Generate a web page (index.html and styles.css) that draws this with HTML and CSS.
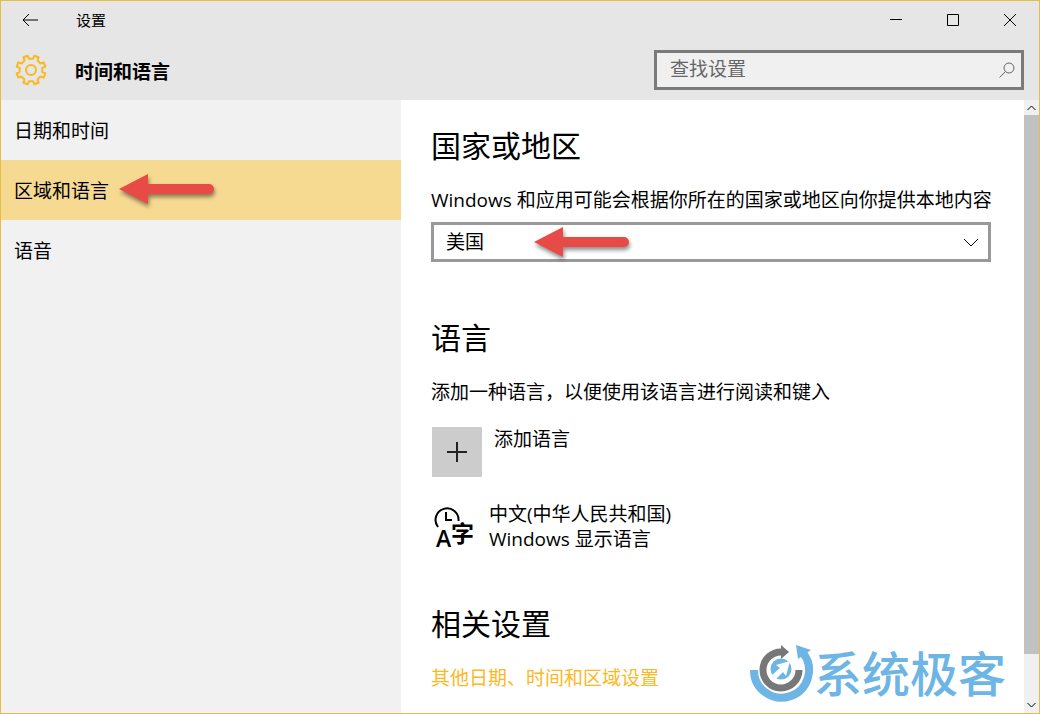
FILE: index.html
```html
<!DOCTYPE html>
<html lang="zh-CN">
<head>
<meta charset="utf-8">
<title>设置</title>
<link rel="stylesheet" href="styles.css">
</head>
<body>
<div class="window">
  <header class="header">
    <div class="titlebar">
      <button class="back" aria-label="后退"><svg width="16" height="14" viewBox="0 0 16 14"><path d="M7 1L1 7l6 6M1 7h15"/></svg></button>
      <span class="app-name">设置</span>
      <div class="controls">
        <button aria-label="最小化"><svg width="12" height="12" viewBox="0 0 12 12"><path d="M0 5.5h12"/></svg></button>
        <button aria-label="最大化"><svg width="12" height="12" viewBox="0 0 12 12"><path d="M.5 .5h11v11H.5z"/></svg></button>
        <button aria-label="关闭"><svg width="12" height="12" viewBox="0 0 12 12"><path d="M0 0l12 12M12 0L0 12"/></svg></button>
      </div>
    </div>
    <div class="page-bar">
      <svg class="gear" width="32" height="32" viewBox="-16 -16 32 32"><path d="M11.300 2.100L14.300 3.400 12.700 7.600 9.500 6.500 6.500 9.500 7.600 12.700 3.400 14.300 2.100 11.300-2.100 11.300-3.400 14.300-7.600 12.700-6.500 9.500-9.500 6.500-12.700 7.600-14.300 3.400-11.300 2.100-11.300-2.100-14.300-3.400-12.700-7.600-9.500-6.500-6.500-9.500-7.600-12.700-3.400-14.300-2.100-11.300 2.100-11.300 3.400-14.300 7.600-12.700 6.500-9.500 9.500-6.500 12.700-7.600 14.300-3.400 11.300-2.100z"/><circle r="5"/></svg>
      <h1>时间和语言</h1>
      <label class="search">
        <input type="search" placeholder="查找设置" aria-label="查找设置">
        <svg width="16" height="16" viewBox="0 0 16 16"><circle cx="10" cy="6" r="5"/><path d="M6.4 9.6L.5 15.5"/></svg>
      </label>
    </div>
  </header>
  <div class="body">
    <nav class="sidebar">
      <a href="#date">日期和时间</a>
      <a href="#region" class="active" aria-current="page">区域和语言</a>
      <a href="#speech">语音</a>
      <svg class="arrow arrow-nav" width="104" height="40" viewBox="0 0 104 40"><path d="M3 18L32 3v10h61a5 5 0 0 1 0 10H32v10z"/></svg>
    </nav>
    <main class="content">
      <section class="region">
        <h2>国家或地区</h2>
        <label for="country">Windows 和应用可能会根据你所在的国家或地区向你提供本地内容</label>
        <div class="select-wrap">
          <select id="country"><option>美国</option></select>
          <svg class="chevron" width="16" height="9" viewBox="0 0 16 9"><path d="M1 1l7 7 7-7"/></svg>
          <svg class="arrow arrow-select" width="104" height="40" viewBox="0 0 104 40"><path d="M3 18L32 3v10h61a5 5 0 0 1 0 10H32v10z"/></svg>
        </div>
      </section>
      <section class="languages">
        <h2>语言</h2>
        <p>添加一种语言，以便使用该语言进行阅读和键入</p>
        <button class="add"><span class="plus"><svg width="20" height="20" viewBox="0 0 20 20"><path d="M10 0v20M0 10h20"/></svg></span><span>添加语言</span></button>
        <div class="language">
          <svg class="lang-icon" width="42" height="50" viewBox="0 0 42 50"><path class="line" d="M5 25A11.500 11.500 0 1 1 25.500 19M13 10v8h6"/><text class="glyph-a" x="3" y="45">A</text><text class="glyph-zi" x="18" y="40">字</text></svg>
          <div>中文(中华人民共和国)<br>Windows 显示语言</div>
        </div>
      </section>
      <section>
        <h2>相关设置</h2>
        <a class="related" href="#more">其他日期、时间和区域设置</a>
      </section>
    </main>
    <div class="scrollbar">
      <svg width="9" height="6" viewBox="0 0 9 6"><path d="M.5 5l4-4 4 4"/></svg>
      <div class="thumb"></div>
      <svg width="9" height="6" viewBox="0 0 9 6"><path d="M.5 1l4 4 4-4"/></svg>
    </div>
  </div>
  <div class="watermark">
    <svg width="64" height="60" viewBox="0 0 64 60"><path class="blue-line" d="M4 26A27.500 27.500 0 1 0 53 9"/><path class="blue" d="M46 1l15 5-13 9z"/><path class="gray-line" d="M32 8A18 18 0 1 0 49 26"/><path class="gray" d="M31 1l8 7-8 7z"/><circle class="blue" cx="31" cy="25" r="10.500"/><path class="white" d="M40 17l-4 15-3-4-7 7-4-4 8-7-4-3z"/></svg>
    <span>系统极客</span>
  </div>
</div>
</body>
</html>
```
FILE: styles.css
```css
* { box-sizing: border-box; }
body {
  margin: 0;
  font: 19px/25px "Open Sans", "Noto Sans CJK SC", sans-serif;
  color: #000;
}
h1, h2, p { margin: 0; }
button, input, select { font: inherit; color: inherit; border: 0; border-radius: 0; background: none; padding: 0; }
a { color: inherit; text-decoration: none; }
svg { display: block; flex: none; fill: none; stroke: #000; }
.window { position: relative; display: flex; flex-direction: column; min-height: 100vh; border: 1px solid #e8bd42; }
.header { background: #e6e6e6; }
.titlebar { display: flex; align-items: center; height: 38px; }
.back { display: grid; place-items: center; width: 58px; height: 38px; }
.app-name { margin-left: 17px; font-size: 15px; }
.controls { display: flex; margin-left: auto; padding-right: 1px; }
.controls button { display: grid; place-items: center; width: 57px; height: 38px; }
.page-bar { display: flex; align-items: center; height: 61px; padding: 0 15px 0 14px; }
.gear { stroke: #fcb81f; stroke-width: 2; stroke-linejoin: round; }
h1 { margin-left: 28px; padding-top: 5px; font-size: 19px; font-weight: 700; }
.search { display: flex; align-items: center; width: 370px; height: 40px; margin-left: auto; padding: 0 6px 0 13px; border: 3px solid #7a7a7a; background: #f0f0f0; }
.search input { flex: 1; min-width: 0; outline: 0; }
.search input::placeholder { color: #666; opacity: 1; }
.search svg { stroke: #666; }
.body { display: flex; flex: 1; }
.sidebar { position: relative; width: 400px; background: #f1f1f1; }
.sidebar a { display: flex; align-items: center; height: 60px; padding: 2px 13px 0; }
.sidebar .active { background: #f7da92; }
.arrow { position: absolute; fill: #e84b45; stroke: none; filter: drop-shadow(1px 3px 2px rgba(0, 0, 0, .45)); }
.arrow-nav { left: 115px; top: 71px; }
.arrow-select { left: 100px; top: 2px; }
.content { flex: 1; min-width: 0; padding: 25px 30px 20px; }
h2 { margin-bottom: 21px; font-size: 30px; line-height: 42px; font-weight: 400; }
.region label { display: block; white-space: nowrap; }
.select-wrap { position: relative; max-width: 560px; margin-top: 9px; }
select { width: 100%; height: 40px; padding: 0 12px; border: 3px solid #999; appearance: none; background: #fff; }
.chevron { position: absolute; right: 12px; top: 16px; }
.languages { margin: 55px 0 51px; }
.add { display: flex; gap: 12px; margin: 22px 0 25px 1px; text-align: left; }
.plus { display: grid; place-items: center; width: 50px; height: 50px; background: #ccc; }
.plus svg { stroke: #222; stroke-width: 2; }
.language { display: flex; gap: 14px; padding-left: 2px; }
.lang-icon { overflow: visible; }
.lang-icon .line { stroke-width: 2; }
.lang-icon text { fill: #000; stroke: none; font-size: 23px; font-weight: 600; }
.related { color: #fcb81f; }
.scrollbar { display: flex; flex-direction: column; align-items: center; width: 15px; padding: 5px 0; background: #f0f0f0; }
.thumb { width: 15px; height: 539px; margin: 4px 0 auto; background: #c1c1c1; }
.watermark { position: absolute; right: 33px; bottom: 9px; display: flex; align-items: center; color: #6cb5e4; font-size: 48px; font-weight: 500; line-height: 60px; }
.blue-line { stroke: #6cb5e4; stroke-width: 8; }
.gray-line { stroke: #777; stroke-width: 7; }
.blue { fill: #6cb5e4; stroke: none; }
.gray { fill: #777; stroke: none; }
.white { fill: #fff; stroke: none; }
```
